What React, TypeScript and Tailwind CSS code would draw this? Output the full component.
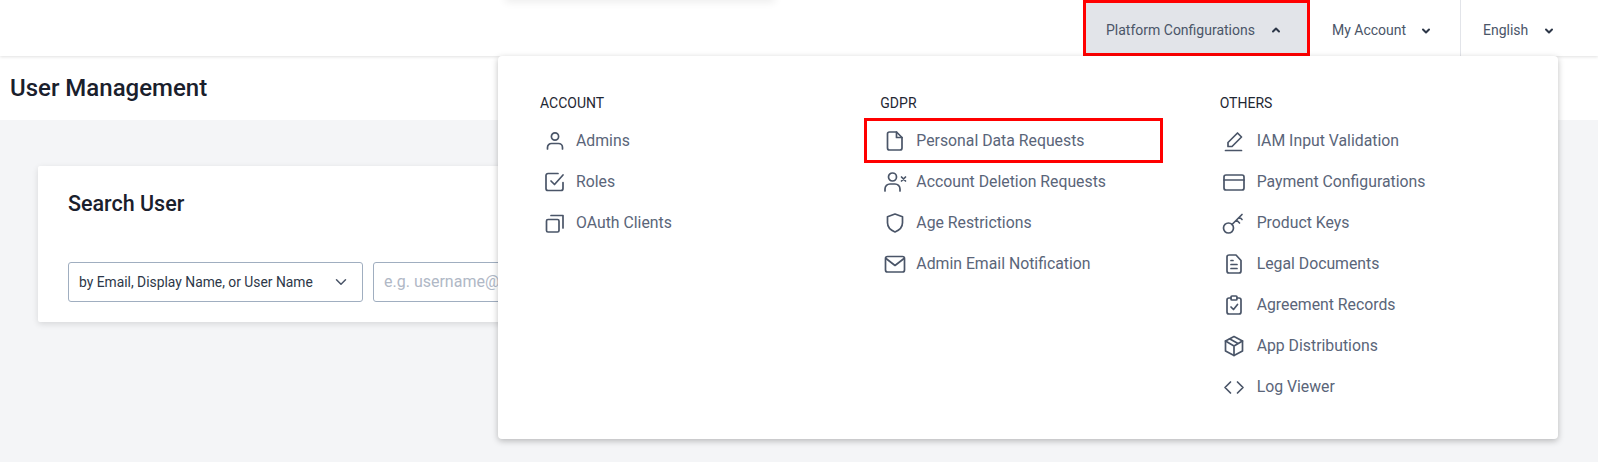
import { ChevronDown, ChevronUp } from 'lucide-react'
import type { ReactNode } from 'react'

const Svg = ({ children }: { children: ReactNode }) => (
  <svg viewBox="0 0 24 24" fill="none" stroke="#4a5568" strokeWidth="1.7" strokeLinecap="round" strokeLinejoin="round" className="h-[24px] w-[24px] shrink-0">
    {children}
  </svg>
)

const icons: Record<string, ReactNode> = {
  user: <><circle cx="12" cy="7.5" r="3.6" /><path d="M4.5 20v-1.5a4 4 0 0 1 4-4h7a4 4 0 0 1 4 4V20" /></>,
  check: <><path d="M20 12.500v6a2 2 0 0 1-2 2H5a2 2 0 0 1-2-2V5.500a2 2 0 0 1 2-2h10" /><path d="M8 11l3.500 3.500 8.500-9.500" /></>,
  copy: <><rect x="3.500" y="8.500" width="12.500" height="12.500" rx="1.500" /><path d="M8 4.500h12v12.500" /></>,
  file: <><path d="M6.500 3h7l5.500 5.500v10.500a2 2 0 0 1-2 2H6.500a2 2 0 0 1-2-2V5a2 2 0 0 1 2-2z" /><path d="M13.500 3v5.500H19" /></>,
  userX: <><circle cx="9.500" cy="7" r="4" /><path d="M2 21v-2a5 5 0 0 1 5-5h5a5 5 0 0 1 5 5v2" /><path d="M18.500 7l4 4M22.500 7l-4 4" /></>,
  shield: <path d="M12 3l7.500 2.800v6c0 4.500-3 7.400-7.500 9.200-4.500-1.800-7.500-4.700-7.500-9.200v-6z" />,
  mail: <><rect x="2.500" y="4.500" width="19" height="15.500" rx="2" /><path d="M3 6.500l9 7 9-7" /></>,
  pen: <><path d="M3.500 21.500h16" /><path d="M6 17.500v-4L15.500 4l4 4-9.500 9.500z" /></>,
  card: <><rect x="2" y="5" width="20" height="15" rx="2" /><path d="M2 10h20" /></>,
  key: <><circle cx="6.500" cy="17" r="5" /><path d="M10 13.500L20 3.500M14.500 9l3 3M17.500 6l2.500 2.500" /></>,
  doc: <><path d="M7 3h7l5 5.500v10.500a2 2 0 0 1-2 2H7a2 2 0 0 1-2-2V5a2 2 0 0 1 2-2z" /><path d="M9 12.500h6M9 16.500h6M9 8.500h2" /></>,
  clipboard: <><path d="M9 5H7a2 2 0 0 0-2 2v12a2 2 0 0 0 2 2h10a2 2 0 0 0 2-2V7a2 2 0 0 0-2-2h-2" /><rect x="9" y="3" width="6" height="4" rx="1" /><path d="M9 14l2.500 2.500 4-5" /></>,
  box: <><path d="M12 2.500l8.500 4.500v10l-8.500 4.500-8.500-4.500V7z" /><path d="M3.500 7l8.500 5 8.500-5M12 12v9.500M7.500 4.800l8.500 4.700" /></>,
  code: <path d="M8.500 7l-5.500 5.500 5.500 5.500M15.500 7l5.500 5.500-5.500 5.500" />,
}

const columns = [
  { title: 'ACCOUNT', items: [['user', 'Admins'], ['check', 'Roles'], ['copy', 'OAuth Clients']], row: 'gap-[9px] pl-[3px]' },
  { title: 'GDPR', items: [['file', 'Personal Data Requests'], ['userX', 'Account Deletion Requests'], ['shield', 'Age Restrictions'], ['mail', 'Admin Email Notification']], row: 'gap-[9px] pl-[3px]' },
  { title: 'OTHERS', items: [['pen', 'IAM Input Validation'], ['card', 'Payment Configurations'], ['key', 'Product Keys'], ['doc', 'Legal Documents'], ['clipboard', 'Agreement Records'], ['box', 'App Distributions'], ['code', 'Log Viewer']], row: 'gap-[11px] pl-[2px]' },
]

export default function App() {
  return (
    <div className="relative h-[462px] w-[1598px] overflow-hidden bg-[#f4f5f7] font-['Roboto',sans-serif]">
      <header className="relative z-10 flex h-[56px] justify-end bg-white shadow-[0_1px_3px_rgba(0,0,0,0.12)]">
        <div className="mr-[40px] flex">
          <button className="flex h-[56px] w-[227px] items-center border-[3px] border-[#ff0000] bg-[#e2e4e9] pl-[20px] pt-[4px] text-[14px] text-[#4a5568]">
            Platform Configurations
            <ChevronUp className="ml-[15px] h-[12px] w-[12px] text-[#2d3748]" strokeWidth={4} />
          </button>
          <button className="flex h-[56px] w-[151px] items-center border-r border-[#e2e4e9] pl-[22px] pt-[5px] text-[14px] text-[#4a5568]">
            My Account
            <ChevronDown className="ml-[14px] h-[12px] w-[12px] text-[#2d3748]" strokeWidth={4} />
          </button>
          <button className="flex h-[56px] w-[97px] items-center pl-[22px] pt-[5px] text-[14px] text-[#4a5568]">
            English
            <ChevronDown className="ml-[15px] h-[12px] w-[12px] text-[#2d3748]" strokeWidth={4} />
          </button>
        </div>
      </header>

      <div className="flex h-[64px] items-center bg-white px-[10px]">
        <h1 className="text-[24px] font-medium text-[#1a202c]">User Management</h1>
      </div>

      <section className="ml-[38px] mt-[46px] h-[156px] w-[900px] rounded-[2px] bg-white px-[30px] shadow-[0_2px_6px_rgba(0,0,0,0.12)]">
        <h2 className="pt-[25px] text-[21.500px] font-medium leading-[26px] text-[#1a202c]">Search User</h2>
        <div className="mt-[45px] flex gap-[10px]">
          <div className="flex h-[40px] w-[295px] items-center justify-between rounded-[3px] border border-[#a0aec0] pl-[10px] pr-[12px] text-[13.850px] text-[#2d3748]">
            by Email, Display Name, or User Name
            <ChevronDown className="h-[18px] w-[18px] text-[#4a5568]" strokeWidth={2} />
          </div>
          <div className="flex h-[40px] w-[300px] items-center rounded-[3px] border border-[#a0aec0] pl-[10px] text-[16px] text-[#b0b8c6]">
            e.g. username@
          </div>
        </div>
      </section>

      <div className="absolute left-[505px] top-[-10px] z-20 h-[10px] w-[270px] shadow-[0_2px_8px_rgba(0,0,0,0.08)]" />

      <nav className="absolute left-[498px] top-[56px] z-20 flex h-[383px] w-[1060px] rounded-[4px] bg-white pl-[42px] pt-[39px] shadow-[0_2px_6px_rgba(0,0,0,0.25)]">
        {columns.map((col) => (
          <div key={col.title} className="w-[340px] [&:not(:first-child)]:pl-[1px]">
            <p className="text-[14px] leading-[16px] text-[#1f2733]">{col.title}</p>
            <ul className="mt-[9px]">
              {col.items.map(([icon, label]) => (
                <li key={label} className={`relative flex h-[41px] items-center text-[15.800px] text-[#5a6579] ${col.row}`}>
                  {label === 'Personal Data Requests' && (
                    <span className="absolute left-[-16px] top-[-2px] h-[45px] w-[299px] border-[3px] border-[#ff0000]" />
                  )}
                  <Svg>{icons[icon]}</Svg>
                  {label}
                </li>
              ))}
            </ul>
          </div>
        ))}
      </nav>
    </div>
  )
}
